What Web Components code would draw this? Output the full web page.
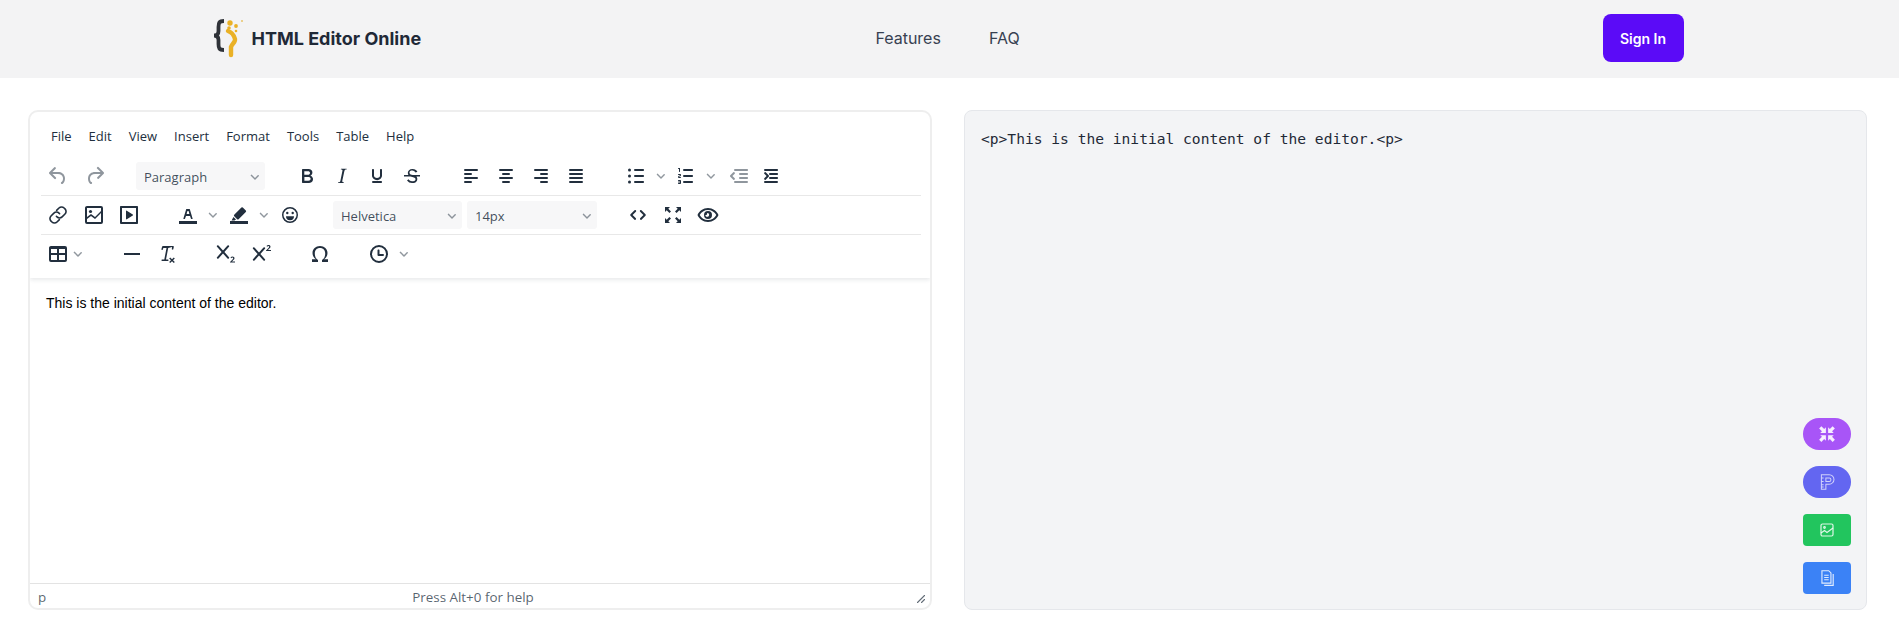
<!DOCTYPE html>
<html lang="en">
<head>
<meta charset="utf-8">
<title>HTML Editor Online</title>
<style>
    html, body {
        margin: 0;
        background: #fff;
        font-family: Inter, "Liberation Sans", sans-serif;
    }
</style>
</head>
<body>
<html-app></html-app>

<script>
// TinyMCE-like toolbar icons, all on a 24x24 box
const ICONS = {
    undo: `<path d="M6.4 8H12c3.7 0 6.2 2 6.8 5.1.6 2.7-.4 5.6-2.3 6.8a1 1 0 0 1-1-1.8c1.1-.6 1.8-2.7 1.4-4.6-.5-2.1-2.1-3.5-4.9-3.5H6.4l3.3 3.3a1 1 0 1 1-1.4 1.4l-5-5a1 1 0 0 1 0-1.4l5-5a1 1 0 0 1 1.4 1.4L6.4 8Z"/>`,
    redo: `<path d="M17.6 10H12c-2.8 0-4.4 1.4-4.9 3.5-.4 2 .3 4 1.4 4.6a1 1 0 1 1-1 1.8c-2-1.2-2.9-4.1-2.3-6.8.6-3 3-5.1 6.8-5.1h5.6l-3.3-3.3a1 1 0 1 1 1.4-1.4l5 5a1 1 0 0 1 0 1.4l-5 5a1 1 0 0 1-1.4-1.4l3.3-3.3Z"/>`,
    bold: `<path d="M7.8 19c-.3 0-.5 0-.6-.2l-.2-.5V5.7c0-.2 0-.4.2-.5l.6-.2h5c1.5 0 2.7.3 3.5 1 .7.6 1.1 1.4 1.1 2.5a3 3 0 0 1-.6 1.9c-.4.6-1 1-1.6 1.2.4.1.9.3 1.3.6s.8.7 1 1.2c.4.4.5 1 .5 1.6 0 1.3-.4 2.3-1.3 3-.8.7-2.1 1-3.8 1H7.8Zm5-8.3c.6 0 1.2-.1 1.6-.5.4-.3.6-.7.6-1.3 0-1.1-.8-1.7-2.3-1.7H9.3v3.5h3.5Zm.5 6c.7 0 1.3-.1 1.7-.4.4-.4.6-.9.6-1.5s-.2-1-.7-1.4c-.4-.3-1-.4-2-.4H9.4v3.7h3.9Z"/>`,
    italic: `<path d="M16.7 4.7l-.1.9h-.3c-.6 0-1 0-1.4.3-.3.3-.4.6-.5 1.1l-2.1 9.8v.6c0 .5.4.8 1.4.8h.2l-.2.8H8l.2-.8h.2c1.1 0 1.8-.5 2-1.5l2-9.8.1-.5c0-.6-.4-.8-1.4-.8h-.3l.2-.9h5.8Z"/>`,
    underline: `<path d="M16 5c.6 0 1 .4 1 1v5.5a4 4 0 0 1-.4 1.8l-1 1.4a5.3 5.3 0 0 1-5.5 1 5 5 0 0 1-1.6-1c-.5-.4-.8-.9-1.1-1.4a4 4 0 0 1-.4-1.8V6c0-.6.4-1 1-1s1 .4 1 1v5.5c0 .3 0 .6.2 1l.6.7a3.3 3.3 0 0 0 2.2.8 3.4 3.4 0 0 0 2.2-.8c.3-.2.4-.5.6-.8l.2-.9V6c0-.6.4-1 1-1ZM8 17h8c.6 0 1 .4 1 1s-.4 1-1 1H8a1 1 0 0 1 0-2Z"/>`,
    strike: `<path d="M15.6 8.5c-.5-.7-1-1.1-1.3-1.3-.6-.4-1.3-.6-2-.6-2.7 0-2.8 1.7-2.8 2.1 0 1.6 1.8 2 3.2 2.3 4.4.9 4.6 2.8 4.6 3.9 0 1.4-.7 4.1-5 4.1A6.2 6.2 0 0 1 7 16.4l1.5-1.1c.4.6 1.6 2 3.7 2 1.6 0 2.5-.4 3-1 .3-.4.3-.8.3-1 0-.8-.5-1.6-3.2-2.2-2.7-.6-4.5-1.6-4.5-4 0-2.2 1.8-4 4.6-4 1.4 0 2.6.4 3.5 1 .6.5 1.1 1 1.5 1.5l-1.4 1ZM4 11h16v1.6H4z"/>`,
    alignleft: lines([[5, 14], [5, 8], [5, 14], [5, 8]]),
    aligncenter: lines([[5, 14], [8, 8], [5, 14], [8, 8]]),
    alignright: lines([[5, 14], [11, 8], [5, 14], [11, 8]]),
    justify: lines([[5, 14], [5, 14], [5, 14], [5, 14]]),
    bullist: `<path d="M11 5h8c.6 0 1 .4 1 1s-.4 1-1 1h-8a1 1 0 0 1 0-2Zm0 6h8c.6 0 1 .4 1 1s-.4 1-1 1h-8a1 1 0 0 1 0-2Zm0 6h8c.6 0 1 .4 1 1s-.4 1-1 1h-8a1 1 0 0 1 0-2Z"/><circle cx="5.5" cy="6" r="1.5"/><circle cx="5.5" cy="12" r="1.5"/><circle cx="5.5" cy="18" r="1.5"/>`,
    numlist: `<path d="M10 17h8c.6 0 1 .4 1 1s-.4 1-1 1h-8a1 1 0 0 1 0-2Zm0-6h8c.6 0 1 .4 1 1s-.4 1-1 1h-8a1 1 0 0 1 0-2Zm0-6h8c.6 0 1 .4 1 1s-.4 1-1 1h-8a1 1 0 1 1 0-2ZM6 4v3.5c0 .3-.2.5-.5.5a.5.5 0 0 1-.5-.5V5h-.5a.5.5 0 0 1 0-1H6Zm-1 8.8.2.2h1.3c.3 0 .5.2.5.5s-.2.5-.5.5H4.9a1 1 0 0 1-.9-1V13c0-.4.3-.8.6-1l1.2-.4.2-.3a.2.2 0 0 0-.2-.2H4.5a.5.5 0 0 1-.5-.5c0-.3.2-.5.5-.5h1.6c.5 0 .9.4.9 1v.1c0 .4-.3.8-.6 1l-1.2.4-.2.3ZM7 17v2c0 .6-.4 1-1 1H4.5a.5.5 0 0 1 0-1h1.2c.2 0 .3-.1.3-.3 0-.2-.1-.3-.3-.3H4.4a.4.4 0 1 1 0-.8h1.3c.2 0 .3-.1.3-.3 0-.2-.1-.3-.3-.3H4.5a.5.5 0 1 1 0-1H6c.6 0 1 .4 1 1Z"/>`,
    outdent: `<g opacity=".5"><path d="M7 5h12c.6 0 1 .4 1 1s-.4 1-1 1H7a1 1 0 1 1 0-2Zm5 4h7c.6 0 1 .4 1 1s-.4 1-1 1h-7a1 1 0 0 1 0-2Zm0 4h7c.6 0 1 .4 1 1s-.4 1-1 1h-7a1 1 0 0 1 0-2Zm-5 4h12a1 1 0 0 1 0 2H7a1 1 0 0 1 0-2Zm-2.600-5 2.300 2.300a1 1 0 0 1-1.400 1.400l-3-3a1 1 0 0 1 0-1.400l3-3a1 1 0 0 1 1.400 1.400L4.400 12Z" transform="translate(3 0)"/></g>`,
    indent: `<path d="M7 5h12c.6 0 1 .4 1 1s-.4 1-1 1H7a1 1 0 1 1 0-2Zm5 4h7c.6 0 1 .4 1 1s-.4 1-1 1h-7a1 1 0 0 1 0-2Zm0 4h7c.6 0 1 .4 1 1s-.4 1-1 1h-7a1 1 0 0 1 0-2Zm-5 4h12a1 1 0 0 1 0 2H7a1 1 0 0 1 0-2Zm1.600-5-2.300-2.300a1 1 0 0 1 1.400-1.400l3 3a1 1 0 0 1 0 1.400l-3 3a1 1 0 0 1-1.400-1.400L8.600 12Z" transform="translate(-2 0)"/>`,
    link: `<g fill="none" stroke="currentColor" stroke-width="1.600" stroke-linecap="round"><path d="M10.600 7.400 13 5a3.600 3.600 0 0 1 5.100 0l.9.9a3.600 3.600 0 0 1 0 5.100l-2.900 2.900a3.600 3.600 0 0 1-5.100 0l-.6-.6"/><path d="M13.400 16.600 11 19a3.600 3.600 0 0 1-5.100 0l-.9-.9a3.600 3.600 0 0 1 0-5.100l2.900-2.900a3.600 3.600 0 0 1 5.100 0l.6.6"/></g>`,
    image: `<path d="M5 3h14a2 2 0 0 1 2 2v14a2 2 0 0 1-2 2H5a2 2 0 0 1-2-2V5c0-1.100.9-2 2-2Zm0 2v9l4-3 4 3 6-6V5H5Zm14 5-6 6-4-3-4 3v3h14v-9Z"/><circle cx="8.500" cy="8.500" r="1.600"/>`,
    media: `<path d="M4 3h16c.6 0 1 .4 1 1v16c0 .6-.4 1-1 1H4a1 1 0 0 1-1-1V4c0-.6.4-1 1-1Zm1 2v14h14V5H5Zm4.800 2.700 6 3.800c.3.2.3.7 0 1l-6 3.800c-.4.2-.8 0-.8-.5V8.200c0-.5.4-.7.8-.5Z"/>`,
    textcolor: `<path d="M3 18h18v3H3z"/><path d="M8.700 16h-.8a.5.5 0 0 1-.5-.6l2.700-9c.1-.3.3-.4.5-.4h2.800c.2 0 .4.1.5.4l2.700 9a.5.5 0 0 1-.5.6h-.8a.5.5 0 0 1-.4-.4l-.7-2.200c0-.3-.3-.4-.5-.4h-3.400c-.2 0-.4.1-.5.4l-.7 2.200c0 .3-.2.4-.4.4Zm2.600-7.600-.6 2a.5.5 0 0 0 .5.6h1.600a.5.5 0 0 0 .5-.6l-.6-2c0-.3-.3-.4-.5-.4h-.4c-.2 0-.4.1-.5.4Z"/>`,
    highlight: `<path d="M3 18h18v3H3z"/><path d="M7.200 11.800 14.400 4.600a1 1 0 0 1 1.400 0l3 3a1 1 0 0 1 0 1.400l-7.200 7.200a1 1 0 0 1-1.400 0l-3-3a1 1 0 0 1 0-1.400ZM6.500 14l2.500 2.500-1.500 1H4.500Z"/>`,
    emoji: `<path d="M12 4a8 8 0 1 1 0 16 8 8 0 0 1 0-16Zm0 1.500a6.500 6.500 0 1 0 0 13 6.500 6.500 0 0 0 0-13Z"/><circle cx="9.300" cy="10" r="1.200"/><circle cx="14.700" cy="10" r="1.200"/><path d="M8 13.200h8a4 4 0 0 1-8 0Z"/>`,
    code: `<path d="M9.900 7.300a1 1 0 0 1 0 1.400L6.600 12l3.300 3.300a1 1 0 0 1-1.400 1.400l-4-4a1 1 0 0 1 0-1.400l4-4a1 1 0 0 1 1.400 0Zm4.200 0a1 1 0 0 1 1.400 0l4 4a1 1 0 0 1 0 1.400l-4 4a1 1 0 0 1-1.400-1.400l3.300-3.300-3.300-3.300a1 1 0 0 1 0-1.400Z"/>`,
    fullscreen: `<path d="M4 4h5L7.300 5.700 10 8.400 8.400 10 5.700 7.300 4 9Zm16 0v5l-1.700-1.700L15.600 10 14 8.400l2.700-2.700L15 4ZM4 20v-5l1.700 1.700L8.400 14l1.600 1.600-2.700 2.700L9 20Zm16 0h-5l1.700-1.700L14 15.600l1.600-1.600 2.700 2.700L20 15Z"/>`,
    preview: `<path d="M12 5c4.800 0 8.800 3 10.500 7-1.700 4-5.700 7-10.500 7S3.200 16 1.500 12C3.200 8 7.200 5 12 5Zm0 2c-3.600 0-6.800 2-8.300 5 1.500 3 4.700 5 8.300 5s6.800-2 8.300-5c-1.500-3-4.700-5-8.300-5Z"/><path d="M12 8a4 4 0 1 1 0 8 4 4 0 0 1 0-8Zm0 2c-.3 0-.6 0-.9.200a1.500 1.500 0 0 1-1.900 1.900 2 2 0 1 0 2.800-2.100Z"/>`,
    table: `<path d="M5 4h14a2 2 0 0 1 2 2v12a2 2 0 0 1-2 2H5a2 2 0 0 1-2-2V6c0-1.100.9-2 2-2Zm0 2v5h6V6H5Zm8 0v5h6V6h-6Zm-8 7v5h6v-5H5Zm8 0v5h6v-5h-6Z"/><path d="M4 5h16v2H4z"/>`,
    hr: `<path d="M4 11h16v2H4z"/>`,
    clear: `<path d="M13.200 6 11 17.500H13a.800.800 0 0 1 0 1.500H7a.800.800 0 0 1 0-1.500h2.300L11.500 6H8.300l-.4 1.600a.800.800 0 0 1-1.500-.4l.6-2.200c.1-.6.500-1 1-1h10a.800.800 0 0 1 .8 1l-.5 2.200a.800.800 0 0 1-1.500-.3l.3-1.900Z"/><path d="M15.200 15.500l1.800 1.800 1.800-1.800 1 1-1.800 1.800 1.800 1.800-1 1-1.800-1.800-1.800 1.800-1-1 1.800-1.800-1.800-1.800Z"/>`,
    subscript: `<path d="m10.400 10 4.600 5.200a1 1 0 0 1-1.500 1.300L9 11.500l-4.500 5a1 1 0 0 1-1.500-1.300L7.600 10 3 4.800a1 1 0 0 1 1.500-1.300L9 8.500l4.500-5a1 1 0 0 1 1.500 1.300L10.400 10Z"/><path d="M16 20.500v-.6l2.500-2.500c.500-.5.700-.8.700-1.100 0-.4-.3-.7-.8-.7-.4 0-.8.200-1.200.600l-.7-.8c.5-.6 1.200-.9 2-.9 1.200 0 2 .700 2 1.700 0 .700-.4 1.200-1.100 1.900l-1.400 1.300H21v1.100h-5Z"/>`,
    superscript: `<path d="m10.400 12 4.600 5.200a1 1 0 0 1-1.500 1.300L9 13.500l-4.500 5a1 1 0 0 1-1.500-1.300L7.600 12 3 6.800a1 1 0 0 1 1.500-1.300L9 10.500l4.500-5a1 1 0 0 1 1.500 1.300L10.400 12Z"/><path d="M16 9v-.6l2.500-2.500c.500-.5.700-.8.700-1.100 0-.4-.3-.7-.8-.7-.4 0-.8.200-1.200.6l-.7-.8c.5-.6 1.200-.9 2-.9 1.200 0 2 .7 2 1.700 0 .7-.4 1.200-1.100 1.900L18 7.900h3V9h-5Z"/>`,
    omega: `<path d="M12 4c4.300 0 7.500 3 7.500 7 0 2.700-1.300 4.800-3.400 6.200H20V20h-6v-2.100c2-1 3.200-3.400 3.200-6.400 0-3.300-2-5.500-5.200-5.500S6.800 8.200 6.800 11.500c0 3 1.200 5.400 3.200 6.400V20H4v-2.800h3.900C5.800 15.800 4.500 13.700 4.500 11c0-4 3.200-7 7.500-7Z"/>`,
    clock: `<path d="M12 3a9 9 0 1 1 0 18 9 9 0 0 1 0-18Zm0 2a7 7 0 1 0 0 14 7 7 0 0 0 0-14Zm-.5 2.500c.6 0 1 .4 1 1V12h3.500a1 1 0 0 1 0 2h-4.500a1 1 0 0 1-1-1V8.500c0-.6.400-1 1-1Z"/>`,
    chevron: `<path d="M8.700 2.200c.3.300.3.800 0 1.100L5.500 6.500a.800.800 0 0 1-1 0L1.300 3.300A.800.800 0 1 1 2.300 2.200L5 4.900l2.700-2.700c.3-.3.700-.3 1 0Z" transform="translate(7 8)" opacity=".5"/>`,
};

function lines(rows) {
    let out = "";

    rows.forEach(function(row, i) {
        out += `<rect x="${row[0]}" y="${5 + i * 4}" width="${row[1]}" height="2" rx="1"/>`;
    });

    return out;
}

class ToolIcon extends HTMLElement {
    connectedCallback() {
        const shadow = this.attachShadow({ mode: "open" });
        const narrow = this.getAttribute("name") === "chevron";

        shadow.innerHTML = `
        <style>
            :host {
                display: flex;
                flex: none;
                width: ${narrow ? 15 : 35}px;
                height: 28px;
                align-items: center;
                justify-content: center;
                color: #222f3e;
            }

            svg {
                width: 24px;
                height: 24px;
                fill: currentColor;
                flex: none;
            }
        </style>
        <svg viewBox="0 0 24 24">${ICONS[this.getAttribute("name")]}</svg>`;
    }
}

customElements.define("tool-icon", ToolIcon);

class ToolSelect extends HTMLElement {
    connectedCallback() {
        const shadow = this.attachShadow({ mode: "open" });

        shadow.innerHTML = `
        <style>
            :host {
                display: flex;
                flex: none;
                box-sizing: border-box;
                height: 28px;
                padding: 1px 0 0 8.500px;
                align-items: center;
                justify-content: space-between;
                background: #f7f7f8;
                border-radius: 3px;
                font: 13px "Open Sans", sans-serif;
                color: rgba(34, 47, 62, .85);
            }

            svg {
                width: 24px;
                height: 24px;
                margin-right: -2px;
                fill: #222f3e;
            }
        </style>
        <slot></slot>
        <svg viewBox="0 0 24 24">${ICONS.chevron}</svg>`;
    }
}

customElements.define("tool-select", ToolSelect);

class ToolRow extends HTMLElement {
    connectedCallback() {
        const shadow = this.attachShadow({ mode: "open" });

        shadow.innerHTML = `
        <style>
            :host {
                display: flex;
                box-sizing: border-box;
                height: 39px;
                align-items: center;
                border-bottom: 1px solid #e8e8e8;
            }

            :host([last]) {
                border-bottom: 0;
                padding-bottom: 2px;
            }
        </style>
        <slot></slot>`;
    }
}

customElements.define("tool-row", ToolRow);

class MenuBar extends HTMLElement {
    connectedCallback() {
        const shadow = this.attachShadow({ mode: "open" });
        const items = ["File", "Edit", "View", "Insert", "Format", "Tools", "Table", "Help"];

        shadow.innerHTML = `
        <style>
            :host {
                display: flex;
                gap: 17px;
                height: 43px;
                padding: 2px 0 0 10.500px;
                align-items: center;
                font: 13px "Open Sans", sans-serif;
                color: #222f3e;
            }
        </style>
        ${items.map(item => `<span>${item}</span>`).join("")}`;
    }
}

customElements.define("menu-bar", MenuBar);

class RichEditor extends HTMLElement {
    connectedCallback() {
        const shadow = this.attachShadow({ mode: "open" });

        shadow.innerHTML = `
        <style>
            :host {
                display: flex;
                flex-direction: column;
                box-sizing: border-box;
                flex: 0 0 904px;
                height: 500px;
                border: 2px solid #eeeeee;
                border-radius: 10px;
                overflow: hidden;
                background: #fff;
            }

            .head {
                box-sizing: border-box;
                height: 166px;
                padding: 0 9px 0 10.500px;
                box-shadow: 0 2px 4px rgba(34, 47, 62, .1);
            }

            .content {
                flex: 1;
                padding: 16px 16px 0;
                font: 14px/18px "Liberation Sans", Arial, sans-serif;
                color: #000;
            }

            .status {
                display: flex;
                box-sizing: border-box;
                height: 25px;
                padding: 1px 3px 0 8px;
                align-items: center;
                border-top: 1px solid #e3e3e3;
                font: 13.400px "Open Sans", sans-serif;
                color: rgba(34, 47, 62, .75);
            }

            .status .help {
                margin-left: 366px;
            }

            .status svg {
                width: 10px;
                height: 10px;
                margin-left: auto;
                margin-top: 4px;
                margin-right: 1px;
                fill: rgba(34, 47, 62, .7);
            }
        </style>

        <div class="head">
            <menu-bar></menu-bar>

            <tool-row>
                <tool-icon name="undo" style="opacity:.5"></tool-icon>
                <tool-icon name="redo" style="margin-left:2px;opacity:.5"></tool-icon>
                <tool-select style="margin-left:23px;width:129px">Paragraph</tool-select>
                <tool-icon name="bold" style="margin-left:25px"></tool-icon>
                <tool-icon name="italic"></tool-icon>
                <tool-icon name="underline"></tool-icon>
                <tool-icon name="strike"></tool-icon>
                <tool-icon name="alignleft" style="margin-left:24px"></tool-icon>
                <tool-icon name="aligncenter"></tool-icon>
                <tool-icon name="alignright"></tool-icon>
                <tool-icon name="justify"></tool-icon>
                <tool-icon name="bullist" style="margin-left:25px"></tool-icon>
                <tool-icon name="chevron"></tool-icon>
                <tool-icon name="numlist"></tool-icon>
                <tool-icon name="chevron"></tool-icon>
                <tool-icon name="outdent" style="margin-left:1px"></tool-icon>
                <tool-icon name="indent"></tool-icon>
            </tool-row>

            <tool-row>
                <tool-icon name="link"></tool-icon>
                <tool-icon name="image" style="margin-left:1px"></tool-icon>
                <tool-icon name="media"></tool-icon>
                <tool-icon name="textcolor" style="margin-left:24px"></tool-icon>
                <tool-icon name="chevron"></tool-icon>
                <tool-icon name="highlight" style="margin-left:1px"></tool-icon>
                <tool-icon name="chevron"></tool-icon>
                <tool-icon name="emoji" style="margin-left:1px"></tool-icon>
                <tool-select style="margin-left:25px;width:129px">Helvetica</tool-select>
                <tool-select style="margin-left:5px;width:130px">14px</tool-select>
                <tool-icon name="code" style="margin-left:24px"></tool-icon>
                <tool-icon name="fullscreen"></tool-icon>
                <tool-icon name="preview"></tool-icon>
            </tool-row>

            <tool-row last>
                <tool-icon name="table"></tool-icon>
                <tool-icon name="chevron" style="margin-left:-5px"></tool-icon>
                <tool-icon name="hr" style="margin-left:29px"></tool-icon>
                <tool-icon name="clear"></tool-icon>
                <tool-icon name="subscript" style="margin-left:24px"></tool-icon>
                <tool-icon name="superscript" style="margin-left:1px"></tool-icon>
                <tool-icon name="omega" style="margin-left:23px"></tool-icon>
                <tool-icon name="clock" style="margin-left:24px"></tool-icon>
                <tool-icon name="chevron"></tool-icon>
            </tool-row>
        </div>

        <div class="content"><slot></slot></div>

        <div class="status">
            <span>p</span>
            <span class="help">Press Alt+0 for help</span>
            <svg viewBox="0 0 10 10"><path d="M8.100 1.100A.5.5 0 1 1 8.900 1.900L1.900 8.900A.5.5 0 1 1 1.100 8.100ZM8.100 5.100A.5.5 0 1 1 8.900 5.900L5.900 8.900A.5.5 0 1 1 5.100 8.100Z"/></svg>
        </div>`;
    }
}

customElements.define("rich-editor", RichEditor);

class FabButton extends HTMLElement {
    connectedCallback() {
        const shadow = this.attachShadow({ mode: "open" });

        shadow.innerHTML = `
        <style>
            :host {
                display: flex;
                width: 48px;
                height: 32px;
                align-items: center;
                justify-content: center;
                border-radius: 4px;
                background: var(--fab-bg, #3b82f6);
            }

            :host([round]) {
                border-radius: 16px;
            }
        </style>
        <slot></slot>`;
    }
}

customElements.define("fab-button", FabButton);

class SourcePanel extends HTMLElement {
    connectedCallback() {
        const shadow = this.attachShadow({ mode: "open" });

        shadow.innerHTML = `
        <style>
            :host {
                display: block;
                position: relative;
                box-sizing: border-box;
                flex: 0 0 903px;
                height: 500px;
                padding: 16px;
                background: #f3f4f6;
                border: 1px solid #e5e7eb;
                border-radius: 8px;
            }

            pre {
                margin: 0;
                font: 14.6px/24px "DejaVu Sans Mono", monospace;
                color: #1f2937;
            }

            .actions {
                position: absolute;
                right: 15px;
                bottom: 15px;
                display: flex;
                flex-direction: column;
                gap: 16px;
            }
        </style>

        <pre><slot></slot></pre>

        <div class="actions">
            <slot name="actions"></slot>
        </div>`;
    }
}

customElements.define("source-panel", SourcePanel);

class SiteHeader extends HTMLElement {
    connectedCallback() {
        const shadow = this.attachShadow({ mode: "open" });

        shadow.innerHTML = `
        <style>
            :host {
                display: block;
                height: 78px;
                background: #f3f3f4;
            }

            .inner {
                display: grid;
                grid-template-columns: 1fr auto 1fr;
                box-sizing: border-box;
                max-width: 1536px;
                height: 100%;
                margin: 0 auto;
                padding: 0 34px 2px 30px;
                align-items: center;
            }

            .brand {
                display: flex;
                align-items: center;
                gap: 8px;
                font-size: 18px;
                font-weight: 700;
                color: #1f2937;
            }

            .brand svg {
                width: 32px;
                height: 42px;
            }

            nav {
                display: flex;
                gap: 48px;
                font-size: 16px;
                color: #374151;
            }

            button {
                justify-self: end;
                width: 81px;
                height: 48px;
                border: 0;
                border-radius: 8px;
                background: #5b0bf7;
                color: #fff;
                font: 600 14px Inter, sans-serif;
            }
        </style>

        <div class="inner">
            <div class="brand">
                <svg viewBox="0 0 32 42">
                    <path d="M12 4C7 4 6.500 6 6.500 10v4c0 3-1.500 4.500-4.500 4.500 3 0 4.500 1.500 4.500 4.500v4c0 4 .5 6 5.500 6" fill="none" stroke="#2f3238" stroke-width="3.800"/>
                    <path d="M16 14c3 1 6 4 7 8 .5 3-3 5-4 8v8" fill="none" stroke="#eab126" stroke-width="4.400" stroke-linecap="round" stroke-linejoin="round"/>
                    <circle cx="18" cy="6" r="2.700" fill="#eab126"/>
                    <circle cx="17" cy="11" r="1.800" fill="#eab126"/>
                    <circle cx="24" cy="9" r="1.900" fill="#eab126"/>
                    <circle cx="24" cy="14" r="1.300" fill="#eab126"/>
                    <circle cx="30" cy="4" r="1" fill="#e9c46a"/>
                </svg>
                <span>HTML Editor Online</span>
            </div>
            <nav><span>Features</span><span>FAQ</span></nav>
            <button>Sign In</button>
        </div>`;
    }
}

customElements.define("site-header", SiteHeader);

class HtmlApp extends HTMLElement {
    connectedCallback() {
        const shadow = this.attachShadow({ mode: "open" });

        shadow.innerHTML = `
        <style>
            :host {
                display: block;
            }

            main {
                display: flex;
                gap: 32px;
                padding: 32px 0 11px 28px;
            }
        </style>

        <site-header></site-header>

        <main>
            <rich-editor>This is the initial content of the editor.</rich-editor>

            <source-panel>&lt;p&gt;This is the initial content of the editor.&lt;p&gt;
                <fab-button slot="actions" round style="--fab-bg:#a855f7">
                    <svg width="18" height="18" viewBox="0 0 16 16" fill="#fff" fill-opacity=".9"><path d="M1 3l2-2 2.500 2.500L7 2v5H2l1.500-1.500ZM15 3l-2-2-2.500 2.500L9 2v5h5l-1.500-1.500ZM1 13l2 2 2.500-2.500L7 14V9H2l1.500 1.500ZM15 13l-2 2-2.500-2.500L9 14V9h5l-1.500 1.500Z"/></svg>
                </fab-button>
                <fab-button slot="actions" round style="--fab-bg:#6366f1">
                    <svg width="18" height="18" viewBox="0 0 16 16" fill="none" stroke="#fff" stroke-opacity=".7" stroke-width=".9"><path d="M3 1.500h7a4.200 4.200 0 0 1 0 8.400H7v4.600H3ZM3 4.500h2M3 7.500h2M3 10.500h2M3 12.500h2M7 4.500h3a1.500 1.500 0 0 1 0 3H7Z"/></svg>
                </fab-button>
                <fab-button slot="actions" style="--fab-bg:#22c55e">
                    <svg width="16" height="16" viewBox="0 0 16 16" fill="none" stroke="#fff" stroke-opacity=".85" stroke-width="1.200"><rect x="2" y="2" width="12" height="12" rx="1.500"/><circle cx="5.500" cy="5.500" r=".8"/><path d="M2 11l3.500-2.500L8 10.500 14 6"/></svg>
                </fab-button>
                <fab-button slot="actions" style="--fab-bg:#3b82f6">
                    <svg width="18" height="18" viewBox="0 0 16 16" fill="none" stroke="#fff" stroke-opacity=".85" stroke-width="1"><path d="M3.500 1.500h6l2 2v9h-8ZM5.500 5.500h4M5.500 7.500h4M5.500 9.500h4M13.500 4.500v10h-8"/></svg>
                </fab-button>
            </source-panel>
        </main>`;
    }
}

customElements.define("html-app", HtmlApp);
</script>
</body>
</html>
